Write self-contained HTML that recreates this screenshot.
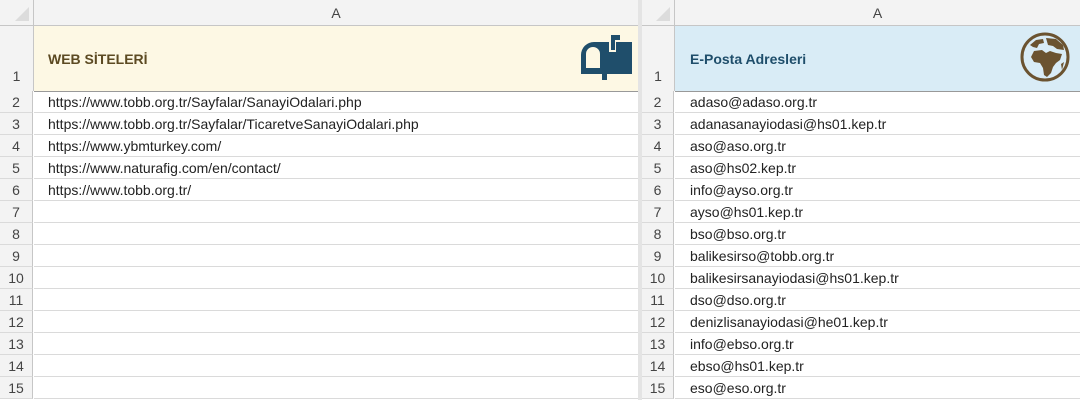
<!DOCTYPE html><html><head><style>
body{margin:0;width:1080px;height:400px;overflow:hidden;background:#fff;font-family:"Liberation Sans",sans-serif;position:relative}
.p{position:absolute;top:0;height:400px;overflow:hidden}
.ch{position:absolute;top:0;height:25px;background:#f3f3f3;border-bottom:1px solid #c6c6c6;color:#444;font-size:14px;text-align:center;line-height:26px}
.rh{position:absolute;left:0;background:#f3f3f3;border-right:1px solid #c6c6c6;color:#444;font-size:14px;text-align:center}
.r{position:absolute;height:22px;border-bottom:1px solid #dadada;font-size:14px;line-height:22px;color:#222;box-sizing:border-box}
.corner{position:absolute;top:0;left:0;height:25px;background:#f3f3f3;border-bottom:1px solid #c6c6c6;border-right:1px solid #c6c6c6}
.tri{position:absolute;right:4px;bottom:4px;width:0;height:0;border-left:14px solid transparent;border-bottom:14px solid #dcdcdc}
</style></head><body>
<div class="p" style="left:0;width:638px">
 <div class="corner" style="width:33px"><div class="tri"></div></div>
 <div class="ch" style="left:34px;width:604px">A</div>
 <div style="position:absolute;left:34px;top:26px;width:604px;height:65px;background:#fdf8e4;border-bottom:1px solid #999"></div>
 <div style="position:absolute;left:48px;top:51px;font-weight:bold;font-size:14px;color:#5c4a22">WEB SİTELERİ</div>
 <svg style="position:absolute;left:580px;top:35px" width="53" height="46" viewBox="0 0 53 46"><path d="M1 39V20A13 13 0 0 1 14 7H29V17H36V7H52V39Z M6 33H20V19A7 7 0 0 0 6 19Z" fill="#1f4e6b" fill-rule="evenodd"/><path d="M22 39H27V45H22Z" fill="#1f4e6b"/><path d="M31 0H40V5H35V15H31Z" fill="#1f4e6b"/></svg>
 <div id="lr"></div>
</div>
<div style="position:absolute;left:638px;top:0;width:4px;height:400px;background:#e4e4e4"></div>
<div class="p" style="left:642px;width:438px">
 <div class="corner" style="width:32px"><div class="tri"></div></div>
 <div class="ch" style="left:33px;width:405px">A</div>
 <div style="position:absolute;left:33px;top:26px;width:405px;height:65px;background:#d9ecf6;border-bottom:1px solid #999"></div>
 <div style="position:absolute;left:48px;top:51px;font-weight:bold;font-size:14px;color:#1f4e6b">E-Posta Adresleri</div>
 <svg style="position:absolute;left:378px;top:32px" width="50" height="50" viewBox="0 0 50 50"><circle cx="25" cy="25" r="23" fill="none" stroke="#6b5330" stroke-width="3"/><path d="M10 13L16 8 23 7 24 11 19 12 17 16 13 15Z M26 6L36 7 43 13 44 18 37 17 33 14 28 13Z M14 19L22 18 26 21 30 19 36 21 42 22 40 28 36 31 33 35 31 41 27 45 24 43 23 36 20 31 14 30 11 25Z M41 32L44 30 42 38Z" fill="#6b5330"/></svg>
 <div id="rr"></div>
</div>
<script>
var L=["https://www.tobb.org.tr/Sayfalar/SanayiOdalari.php","https://www.tobb.org.tr/Sayfalar/TicaretveSanayiOdalari.php","https://www.ybmturkey.com/","https://www.naturafig.com/en/contact/","https://www.tobb.org.tr/"];
var R=["adaso@adaso.org.tr","adanasanayiodasi@hs01.kep.tr","aso@aso.org.tr","aso@hs02.kep.tr","info@ayso.org.tr","ayso@hs01.kep.tr","bso@bso.org.tr","balikesirso@tobb.org.tr","balikesirsanayiodasi@hs01.kep.tr","dso@dso.org.tr","denizlisanayiodasi@he01.kep.tr","info@ebso.org.tr","ebso@hs01.kep.tr","eso@eso.org.tr"];
function b(id,w,rw,arr){var h='<div class="rh" style="top:26px;width:'+(rw-1)+'px;height:65px;line-height:100px">1</div>';
for(var i=0;i<14;i++){var t=91+i*22;h+='<div class="rh" style="top:'+t+'px;width:'+(rw-1)+'px;height:22px;line-height:22px;border-bottom:1px solid #dadada;box-sizing:border-box">'+(i+2)+'</div>';
h+='<div class="r" style="top:'+t+'px;left:'+rw+'px;width:'+(w-rw)+'px;padding-left:'+(48-rw)+'px">'+(arr[i]||'')+'</div>';}
document.getElementById(id).outerHTML=h;}
b('lr',638,34,L);b('rr',438,33,R);
</script>
</body></html>
